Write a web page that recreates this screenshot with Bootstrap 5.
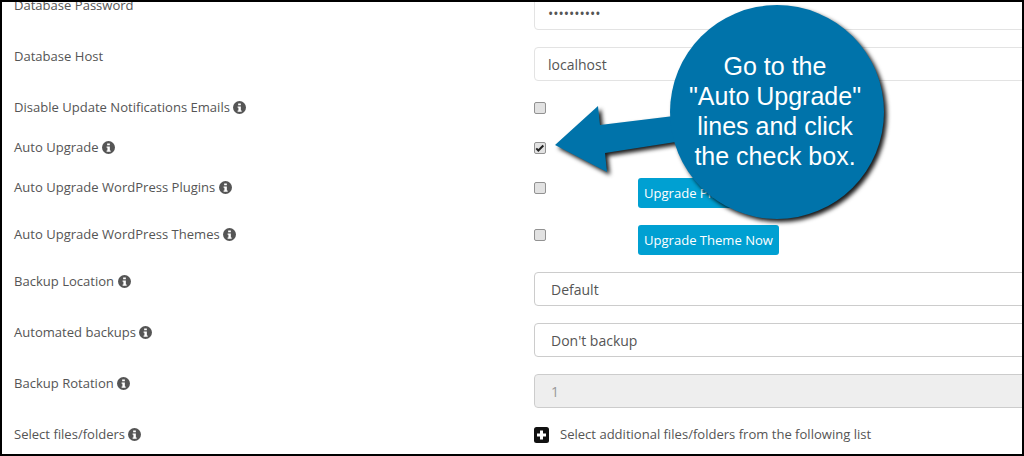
<!DOCTYPE html>
<html lang="en">
<head>
    <meta charset="UTF-8">
    <meta name="viewport" content="width=device-width, initial-scale=1.0">
    <title>Auto Upgrade</title>
    <link href="https://cdn.jsdelivr.net/npm/bootstrap@5.3.2/dist/css/bootstrap.min.css" rel="stylesheet">
    <style>
        body {
            background-color: #fff;
            margin: 0;
            font-family: "Open Sans", sans-serif;
            font-size: 13.05px;
            color: #555;
        }
        .marco {
            position: relative;
            height: 456px;
            border: 2px solid #000;
            overflow: hidden;
        }
        .formulario {
            margin-top: -6px;
        }
        .fila {
            display: flex;
        }
        .fila-campo { height: 51px; }
        .fila-check { height: 40px; }
        .fila-boton { height: 47px; }
        .etiqueta {
            flex: 0 0 532px;
            padding-left: 12px;
            line-height: 18px;
        }
        .valor {
            flex: 0 0 600px;
        }
        .campo.form-control,
        .campo.form-select {
            height: 34px;
            width: 600px;
            font-size: 14px;
            color: #555;
            border-radius: 4px;
            padding: 6px 13px;
            box-shadow: none;
        }
        .campo.form-control { border-color: #e3e3e3; }
        .campo.form-select {
            border-color: #ccc;
            padding: 6px 16px;
            background-image: none;
        }
        .campo.form-control:disabled {
            background-color: #eee;
            border-color: #ccc;
            color: #999;
            padding-left: 16px;
        }
        .casilla.form-check-input {
            width: 12px;
            height: 12px;
            margin: 4px 0 0;
            flex: 0 0 12px;
            background-color: #e2e2e2;
            border: 1px solid #929292;
            border-radius: 2px;
        }
        .casilla.form-check-input:checked {
            background-color: #e2e2e2;
            border-color: #929292;
            background-image: url("data:image/svg+xml,%3csvg xmlns='http://www.w3.org/2000/svg' viewBox='0 0 12 12'%3e%3cpath fill='none' stroke='%23222' stroke-width='2.400' d='M1.500 6.500l2.500 2.500L10 3'/%3e%3c/svg%3e");
        }
        .btn-subir.btn {
            margin-left: 92px;
            height: 30px;
            padding: 0 6px;
            font-size: 13.05px;
            line-height: 30px;
            color: #fff;
            background-color: #00a0d2;
            border: 0;
            border-radius: 3px;
            white-space: nowrap;
        }
        .info {
            width: 13px;
            height: 13px;
            vertical-align: -2px;
        }
        .mas {
            width: 15px;
            height: 16px;
            margin: 2px 11px 0 0;
        }
        .aviso {
            position: absolute;
            left: 550px;
            top: 0;
            width: 345px;
            height: 225px;
        }
        .aviso svg {
            position: absolute;
            inset: 0;
            filter: drop-shadow(3px 3px 2px rgba(0, 0, 0, .9));
        }
        .aviso-texto {
            position: absolute;
            left: 116px;
            top: 0;
            width: 214px;
            height: 218px;
            font-family: "Liberation Sans", Arial, sans-serif;
            font-size: 25px;
            line-height: 30px;
            color: #fff;
            text-align: center;
        }
    </style>
</head>
<body>
    <div class="marco">
        <svg width="0" height="0" class="d-none">
            <symbol id="icono-info" viewBox="0 0 24 24">
                <circle cx="12" cy="12" r="12" fill="#555"/>
                <path fill="#fff" d="M9.5 4.5h5v3.500h-5zM8.500 10h6v7.500h1.500v2.500H8.500v-2.500h1.500v-5h-1.500z"/>
            </symbol>
        </svg>

        <div class="formulario">
            <div class="fila fila-campo">
                <div class="etiqueta">Database Password</div>
                <div class="valor"><input class="form-control campo" type="password" value="1234567890"></div>
            </div>
            <div class="fila fila-campo">
                <div class="etiqueta">Database Host</div>
                <div class="valor"><input class="form-control campo" type="text" value="localhost"></div>
            </div>
            <div class="fila fila-check">
                <div class="etiqueta">Disable Update Notifications Emails <svg class="info"><use href="#icono-info"/></svg></div>
                <div class="valor d-flex"><input class="form-check-input casilla" type="checkbox"></div>
            </div>
            <div class="fila fila-check">
                <div class="etiqueta">Auto Upgrade <svg class="info"><use href="#icono-info"/></svg></div>
                <div class="valor d-flex"><input class="form-check-input casilla" type="checkbox" checked></div>
            </div>
            <div class="fila fila-boton">
                <div class="etiqueta">Auto Upgrade WordPress Plugins <svg class="info"><use href="#icono-info"/></svg></div>
                <div class="valor d-flex"><input class="form-check-input casilla" type="checkbox"><button class="btn btn-subir" type="button">Upgrade Plugins Now</button></div>
            </div>
            <div class="fila fila-boton">
                <div class="etiqueta">Auto Upgrade WordPress Themes <svg class="info"><use href="#icono-info"/></svg></div>
                <div class="valor d-flex"><input class="form-check-input casilla" type="checkbox"><button class="btn btn-subir" type="button">Upgrade Theme Now</button></div>
            </div>
            <div class="fila fila-campo">
                <div class="etiqueta">Backup Location <svg class="info"><use href="#icono-info"/></svg></div>
                <div class="valor"><select class="form-select campo"><option>Default</option></select></div>
            </div>
            <div class="fila fila-campo">
                <div class="etiqueta">Automated backups <svg class="info"><use href="#icono-info"/></svg></div>
                <div class="valor"><select class="form-select campo"><option>Don't backup</option></select></div>
            </div>
            <div class="fila fila-campo">
                <div class="etiqueta">Backup Rotation <svg class="info"><use href="#icono-info"/></svg></div>
                <div class="valor"><input class="form-control campo" type="text" value="1" disabled></div>
            </div>
            <div class="fila fila-campo">
                <div class="etiqueta">Select files/folders <svg class="info"><use href="#icono-info"/></svg></div>
                <div class="valor d-flex">
                    <svg class="mas" viewBox="0 0 15 16"><rect width="15" height="16" rx="2.500" fill="#111"/><path fill="#fff" d="M6 3.500h3V6.500h3v3H9v3H6v-3H3v-3h3z"/></svg>
                    <span>Select additional files/folders from the following list</span>
                </div>
            </div>
        </div>

        <!-- Llamada azul encima del formulario -->
        <div class="aviso">
            <svg width="345" height="225" viewBox="550 2 345 225">
                <path fill="#0073aa" d="M553 145L596 106L598 125L680 115L680 141L603 153L605 172Z"/>
                <circle cx="775" cy="112" r="107" fill="#0073aa"/>
            </svg>
            <div class="aviso-texto d-flex flex-column justify-content-center">
                <div>Go to the</div>
                <div>"Auto Upgrade"</div>
                <div>lines and click</div>
                <div>the check box.</div>
            </div>
        </div>
    </div>

    <script src="https://cdn.jsdelivr.net/npm/bootstrap@5.3.2/dist/js/bootstrap.bundle.min.js"></script>
</body>
</html>
